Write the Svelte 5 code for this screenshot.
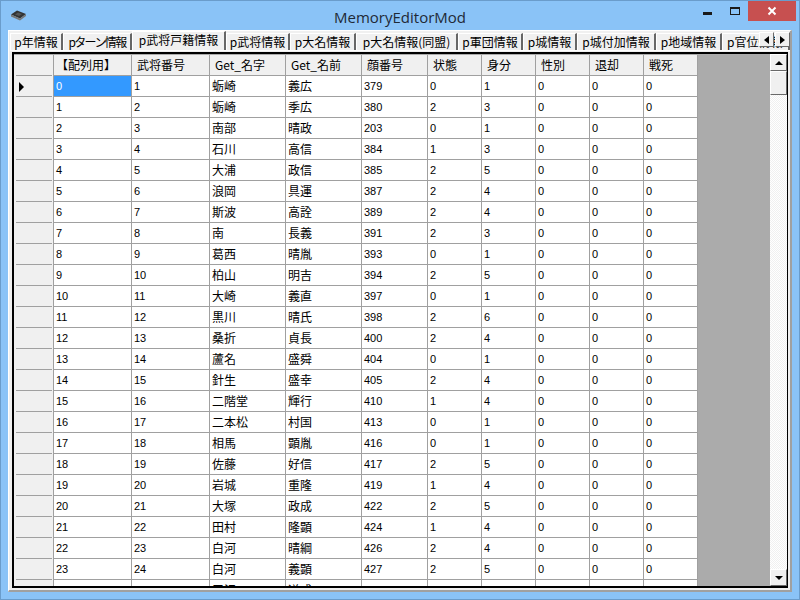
<script lang="ts">
	const tabs = [
		{ label: 'p年情報', width: 53 },
		{ label: 'pターン情報', width: 69 },
		{ label: 'p武将戸籍情報', width: 94 },
		{ label: 'p武将情報', width: 64 },
		{ label: 'p大名情報', width: 66 },
		{ label: 'p大名情報(同盟)', width: 102 },
		{ label: 'p軍団情報', width: 65 },
		{ label: 'p城情報', width: 54 },
		{ label: 'p城付加情報', width: 79 },
		{ label: 'p地域情報', width: 66 },
		{ label: 'p官位情報', width: 66 }
	];
	const activeTab = 2;
	const columns = ['【配列用】', '武将番号', 'Get_名字', 'Get_名前', '顔番号', '状態', '身分', '性別', '退却', '戦死'];
	// 配列用, 武将番号 are row index based so only the rest is listed
	const people: [string, string, number, number, number][] = [
		['蛎崎', '義広', 379, 0, 1],
		['蛎崎', '季広', 380, 2, 3],
		['南部', '晴政', 203, 0, 1],
		['石川', '高信', 384, 1, 3],
		['大浦', '政信', 385, 2, 5],
		['浪岡', '具運', 387, 2, 4],
		['斯波', '高詮', 389, 2, 4],
		['南', '長義', 391, 2, 3],
		['葛西', '晴胤', 393, 0, 1],
		['柏山', '明吉', 394, 2, 5],
		['大崎', '義直', 397, 0, 1],
		['黒川', '晴氏', 398, 2, 6],
		['桑折', '貞長', 400, 2, 4],
		['蘆名', '盛舜', 404, 0, 1],
		['針生', '盛幸', 405, 2, 4],
		['二階堂', '輝行', 410, 1, 4],
		['二本松', '村国', 413, 0, 1],
		['相馬', '顕胤', 416, 0, 1],
		['佐藤', '好信', 417, 2, 5],
		['岩城', '重隆', 419, 1, 4],
		['大塚', '政成', 422, 2, 5],
		['田村', '隆顕', 424, 1, 4],
		['白河', '晴綱', 426, 2, 4],
		['白河', '義顕', 427, 2, 5],
		['三沢', '道成', 429, 0, 1]
	];
</script>

<div class="window">
	<header class="titlebar">
		<svg class="app-icon" width="16" height="11" viewBox="0 0 16 11">
			<path d="M0 4.5 L6 0.5 L15 4 L9 8.5 Z" fill="#333" />
			<path d="M0 4.5 L9 8.5 L15 4 L15 6 L9 10.5 L0 6.5 Z" fill="#777" />
			<path d="M4 4.5 L7 2.5 L11 4 L8 6 Z" fill="#555" />
		</svg>
		<span class="title">MemoryEditorMod</span>
		<div class="controls">
			<span class="ctl"><i class="min"></i></span>
			<span class="ctl"><i class="max"></i></span>
			<span class="close">
				<svg width="10" height="10" viewBox="0 0 10 10">
					<path d="M1.5 1.5 L8.5 8.5 M8.5 1.5 L1.5 8.5" stroke="#fff" stroke-width="2" />
				</svg>
			</span>
		</div>
	</header>

	<main class="client">
		<nav class="tabstrip">
			<div class="tabs">
				{#each tabs as tab, i}
					<span
						class="tab"
						class:active={i === activeTab}
						class:tight={i === 1}
						style="width: {tab.width}px">{tab.label}</span
					>
				{/each}
			</div>
			<div class="tab-arrows">
				<span class="arrow-btn"><i class="tri-left"></i></span>
				<span class="arrow-btn"><i class="tri-right"></i></span>
			</div>
		</nav>

		<section class="grid-frame">
			<div class="grid-view">
				<div class="row head">
					<div class="rowhead"></div>
					{#each columns as col}
						<div class="cell">{col}</div>
					{/each}
				</div>
				{#each people as p, i}
					<div class="row">
						<div class="rowhead">
							{#if i === 0}<i class="pointer"></i>{/if}
						</div>
						<div class="cell num" class:selected={i === 0}>{i}</div>
						<div class="cell num">{i + 1}</div>
						<div class="cell">{p[0]}</div>
						<div class="cell">{p[1]}</div>
						<div class="cell num">{p[2]}</div>
						<div class="cell num">{p[3]}</div>
						<div class="cell num">{p[4]}</div>
						<div class="cell num">0</div>
						<div class="cell num">0</div>
						<div class="cell num">0</div>
					</div>
				{/each}
			</div>
			<aside class="scrollbar">
				<span class="sb-btn"><i class="tri-up"></i></span>
				<span class="sb-thumb"></span>
				<span class="sb-track"></span>
				<span class="sb-btn"><i class="tri-down"></i></span>
			</aside>
		</section>
	</main>
</div>

<style>
	:global(body) {
		margin: 0;
	}

	.window {
		width: 800px;
		height: 600px;
		box-sizing: border-box;
		display: flex;
		flex-direction: column;
		background: #8ac3f7;
		border: 1px solid #6a9ccb;
		padding: 0 7px 7px;
		font-family: 'Noto Sans CJK JP', sans-serif;
		color: #000;
		overflow: hidden;
	}

	.titlebar {
		height: 29px;
		flex: none;
		display: flex;
		align-items: flex-start;
		position: relative;
	}

	.app-icon {
		margin: 9px 0 0 3px;
	}

	.title {
		position: absolute;
		left: 0;
		right: 0;
		top: 6px;
		text-align: center;
		font-family: 'Open Sans', sans-serif;
		font-size: 15px;
		line-height: 20px;
		color: #1f2a36;
	}

	.controls {
		margin-left: auto;
		margin-right: -4px;
		display: flex;
	}

	.ctl {
		width: 27px;
		height: 20px;
		display: flex;
		align-items: center;
		justify-content: center;
	}

	.min {
		width: 9px;
		height: 3px;
		background: #1a1a1a;
		margin-top: 5px;
	}

	.max {
		width: 8px;
		height: 5px;
		border: 1px solid #1a1a1a;
		border-top-width: 2px;
	}

	.close {
		width: 48px;
		height: 20px;
		background: #c75050;
		display: flex;
		align-items: center;
		justify-content: center;
	}

	.client {
		flex: 1;
		min-height: 0;
		display: flex;
		flex-direction: column;
		background: #f0f0f0;
		border-top: 1px solid #fff;
		border-left: 1px solid #fff;
		border-right: 2px solid #a0a0a0;
		border-bottom: 2px solid #a0a0a0;
	}

	.tabstrip {
		height: 20px;
		flex: none;
		display: flex;
		padding-left: 1px;
		box-sizing: border-box;
		position: relative;
		overflow: hidden;
	}

	.tabs {
		flex: 1;
		min-width: 0;
		display: flex;
		align-items: flex-end;
		overflow: hidden;
		border-bottom: 1px solid #fff;
	}

	.tab {
		flex: none;
		height: 17px;
		box-sizing: border-box;
		font-size: 12px;
		line-height: 16px;
		text-align: center;
		background: #f0f0f0;
		border-left: 1px solid #fff;
		border-top: 1px solid #fff;
		border-right: 2px solid #666;
		white-space: nowrap;
		overflow: hidden;
	}

	.tab.active {
		height: 20px;
		line-height: 16px;
		margin-bottom: -1px;
	}

	.tab.tight {
		letter-spacing: -1.6px;
	}

	.tab:last-child {
		text-align: left;
		padding-left: 4px;
		flex: 1;
	}

	.tab-arrows {
		position: absolute;
		right: 0;
		top: 1px;
		display: flex;
		gap: 1px;
	}

	.arrow-btn {
		width: 15px;
		height: 15px;
		box-sizing: border-box;
		background: #f0f0f0;
		border-right: 1px solid #696969;
		border-bottom: 1px solid #696969;
		border-left: 1px solid #fff;
		border-top: 1px solid #fff;
		display: flex;
		align-items: center;
		justify-content: center;
	}

	.tri-left {
		border: 4px solid transparent;
		border-left: 0;
		border-right: 5px solid #000;
	}

	.tri-right {
		border: 4px solid transparent;
		border-right: 0;
		border-left: 5px solid #000;
	}

	.tri-up {
		border: 4px solid transparent;
		border-top: 0;
		border-bottom: 4px solid #000;
	}

	.tri-down {
		border: 4px solid transparent;
		border-bottom: 0;
		border-top: 4px solid #000;
	}

	.grid-frame {
		flex: 1;
		min-height: 0;
		margin: 1px 2px 2px 3px;
		border: 2px solid #000;
		border-right-width: 1px;
		display: flex;
		background: #ababab;
	}

	.grid-view {
		flex: 1;
		min-width: 0;
		overflow: hidden;
	}

	.row {
		height: 21px;
		display: flex;
	}

	.row.head {
		margin-top: 1px;
	}

	.rowhead {
		width: 40px;
		flex: none;
		box-sizing: border-box;
		background: #f0f0f0 linear-gradient(#a0a0a0, #a0a0a0) 2px 100% / 36px 1px no-repeat;
		border-right: 1px solid #a0a0a0;
		display: flex;
		align-items: center;
		padding-left: 5px;
	}

	.cell {
		width: 54px;
		flex: none;
		box-sizing: border-box;
		padding: 0 0 0 2px;
		background: #fff;
		border-right: 1px solid #a0a0a0;
		border-bottom: 1px solid #a0a0a0;
		font-size: 12px;
		line-height: 20px;
		white-space: nowrap;
		overflow: hidden;
	}

	.cell:nth-child(2),
	.cell:nth-child(3) {
		width: 78px;
	}

	.cell:nth-child(4),
	.cell:nth-child(5) {
		width: 76px;
	}

	.cell:nth-child(6) {
		width: 66px;
	}

	.head .cell {
		background: #f0f0f0;
		padding-left: 5px;
	}

	.head .cell:nth-child(2) {
		padding-left: 2px;
	}

	.num {
		font-family: 'Liberation Sans', sans-serif;
		font-size: 11px;
	}

	.cell.selected {
		background: #3399ff;
		color: #fff;
	}

	.pointer {
		border: 5px solid transparent;
		border-right: 0;
		border-left: 5px solid #000;
	}

	.scrollbar {
		width: 17px;
		flex: none;
		display: flex;
		flex-direction: column;
		background: #fff;
	}

	.sb-btn {
		height: 17px;
		flex: none;
		box-sizing: border-box;
		background: #f0f0f0;
		border-right: 1px solid #696969;
		border-bottom: 1px solid #696969;
		border-top: 1px solid #fff;
		border-left: 1px solid #fff;
		display: flex;
		align-items: center;
		justify-content: center;
	}

	.sb-thumb {
		height: 24px;
		flex: none;
		box-sizing: border-box;
		background: #f0f0f0;
		border-right: 1px solid #696969;
		border-bottom: 1px solid #696969;
		border-top: 1px solid #fff;
		border-left: 1px solid #fff;
	}

	.sb-track {
		flex: 1;
		background: repeating-conic-gradient(#f0f0f0 0 25%, #fff 0 50%) 0 0 / 2px 2px;
	}
</style>
